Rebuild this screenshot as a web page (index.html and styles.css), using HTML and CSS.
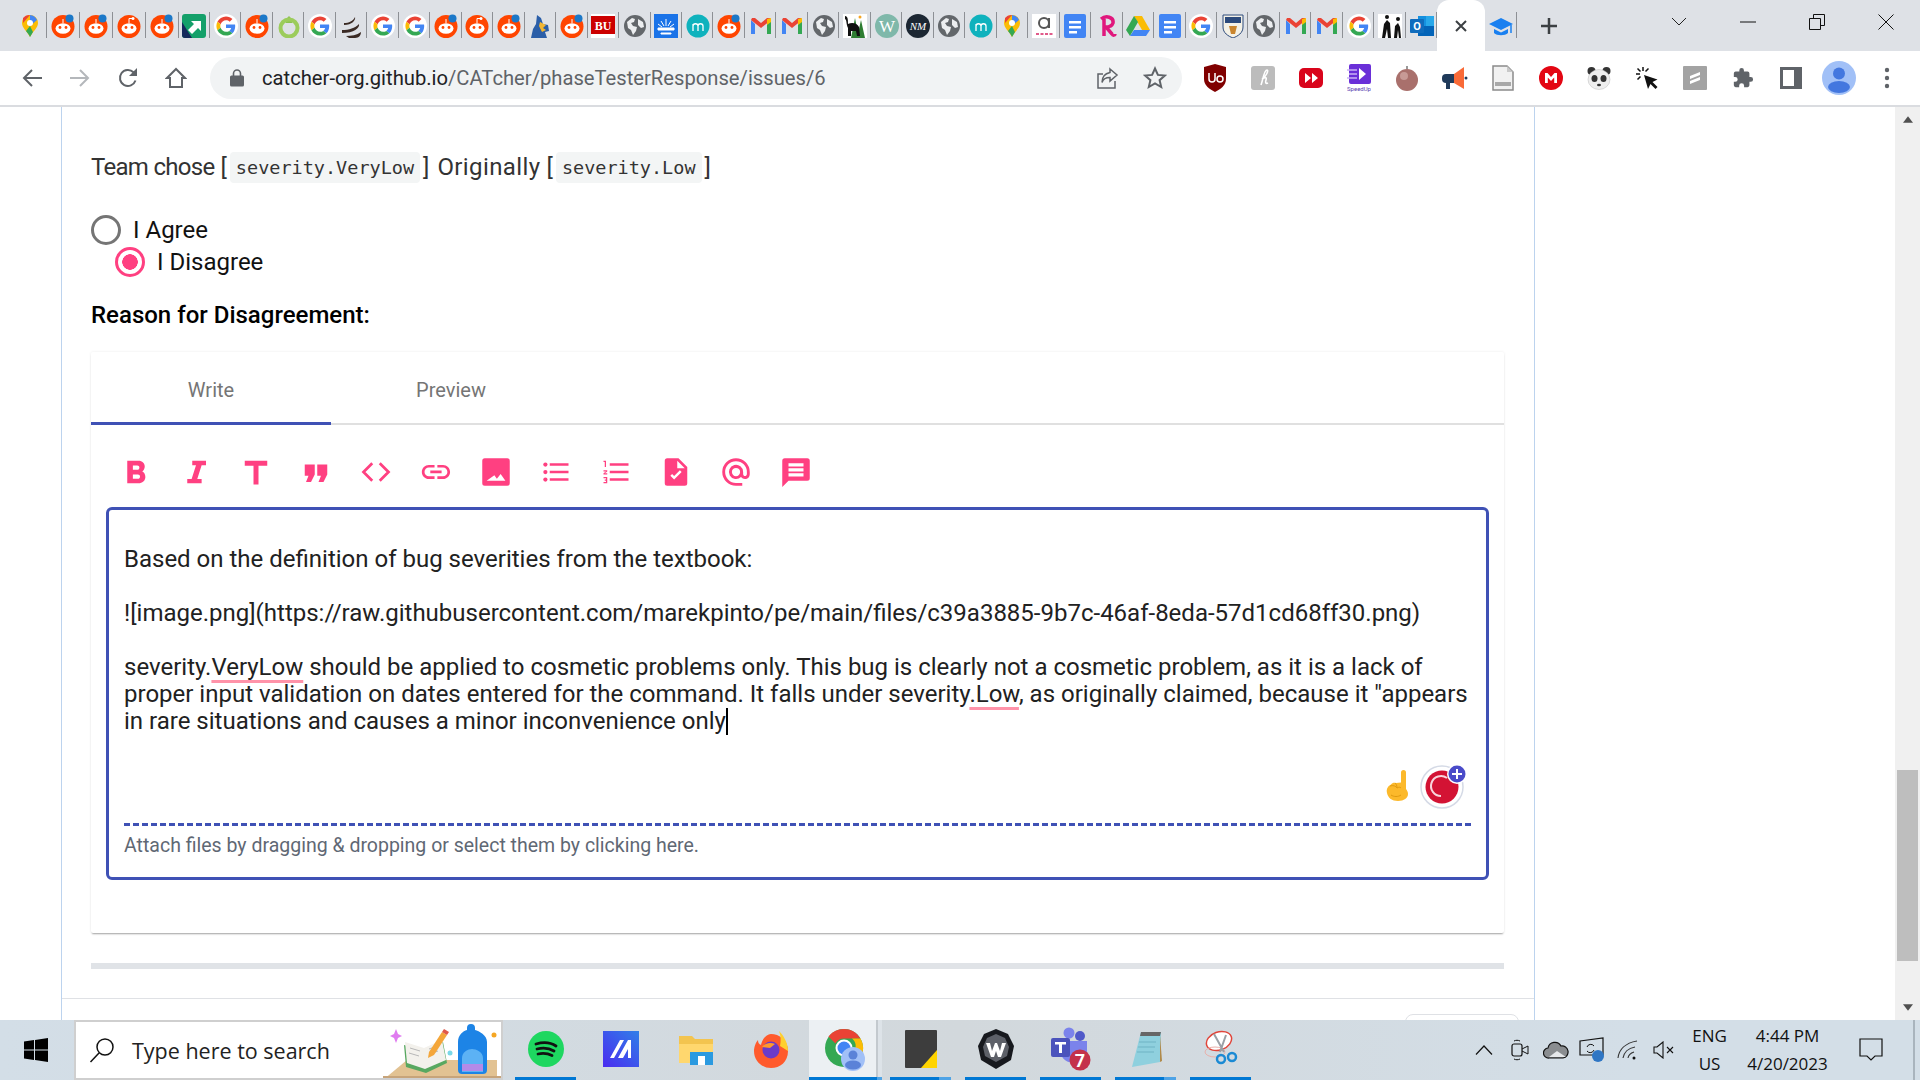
FILE: index.html
```html
<!DOCTYPE html>
<html lang="en">
<head>
    <meta charset="UTF-8">
    <meta name="viewport" content="width=device-width, initial-scale=1.0">
    <title>CATcher</title>
    <link rel="stylesheet" href="styles.css">
</head>
<body>
<svg class="defs" width="0" height="0">
    <symbol id="reddit" viewBox="0 0 24 24">
        <circle cx="12" cy="12.5" r="11.500" fill="#ff4500"/>
        <ellipse cx="12" cy="14.500" rx="7.500" ry="5.200" fill="#fff"/>
        <circle cx="9" cy="13.500" r="1.400" fill="#ff4500"/><circle cx="15" cy="13.500" r="1.400" fill="#ff4500"/>
        <path d="M12 9V5" stroke="#fff" stroke-width="1"/>
        <circle cx="18.500" cy="4.500" r="4" fill="#1c78c8"/>
    </symbol>
    <symbol id="reddit2" viewBox="0 0 24 24">
        <circle cx="12" cy="12.500" r="11.500" fill="#ff4500"/>
        <ellipse cx="12" cy="14.500" rx="7.500" ry="5.200" fill="#fff"/>
        <circle cx="9" cy="13.500" r="1.400" fill="#ff4500"/><circle cx="15" cy="13.500" r="1.400" fill="#ff4500"/>
        <path d="M12 9V4.500h3" stroke="#fff" stroke-width="1" fill="none"/><circle cx="16" cy="4.500" r="1.500" fill="#fff"/>
    </symbol>
    <symbol id="google" viewBox="-6 -6 60 60">
        <circle cx="24" cy="24" r="30" fill="#fff"/>
        <path fill="#EA4335" d="M24 9.500c3.540 0 6.710 1.220 9.210 3.600l6.850-6.850C35.900 2.380 30.470 0 24 0 14.620 0 6.510 5.380 2.560 13.220l7.980 6.190C12.430 13.720 17.740 9.500 24 9.500z"/>
        <path fill="#4285F4" d="M46.980 24.550c0-1.570-.15-3.090-.38-4.550H24v9.020h12.940c-.58 2.960-2.260 5.480-4.780 7.180l7.730 6c4.510-4.180 7.090-10.360 7.090-17.650z"/>
        <path fill="#FBBC05" d="M10.530 28.590c-.5-1.450-.78-2.990-.78-4.590s.27-3.140.78-4.590l-7.980-6.190C.92 16.460 0 20.120 0 24c0 3.880.92 7.540 2.560 10.780l7.970-6.190z"/>
        <path fill="#34A853" d="M24 48c6.480 0 11.930-2.130 15.890-5.810l-7.730-6c-2.150 1.450-4.920 2.300-8.160 2.300-6.260 0-11.570-4.220-13.470-9.910l-7.980 6.190C6.510 42.620 14.620 48 24 48z"/>
    </symbol>
    <symbol id="gmail" viewBox="0 0 24 24">
        <path d="M2 6v14h4V10z" fill="#4285f4"/><path d="M22 6v14h-4V10z" fill="#34a853"/>
        <path d="M2 6l10 8 10-8-1-2-3 0-6 5-6-5-3 0z" fill="#ea4335"/><path d="M18 5l4-1v4l-4 3z" fill="#fbbc04"/>
    </symbol>
    <symbol id="globe" viewBox="0 0 24 24">
        <circle cx="12" cy="12" r="11" fill="#63676b"/>
        <path d="M4 8l5-4 3 1-1 3-3 1 2 3 4 1-1 4-3 4-2-5-3-2zM15 5l5 3 1 5-3 1-3-3z" fill="#eceef0"/>
    </symbol>
    <symbol id="mteal" viewBox="0 0 24 24">
        <circle cx="12" cy="12" r="11.500" fill="#0fb2bd"/>
        <path d="M7 17V10M7 12c0-3 5-3 5 0v5M12 12c0-3 5-3 5 0v5" fill="none" stroke="#fff" stroke-width="1.300"/>
    </symbol>
    <symbol id="maps" viewBox="0 0 24 24">
        <path d="M12 1a8 8 0 0 0-8 8c0 5 5 8 8 14 3-6 8-9 8-14a8 8 0 0 0-8-8z" fill="#fbbc04"/>
        <path d="M5 4a8 8 0 0 1 7-3l-7 8z" fill="#ea4335"/>
        <path d="M12 1a8 8 0 0 1 7 5l-7 6z" fill="#4285f4"/>
        <path d="M8 17c1.500 2 3 3.500 4 6l3-5-3-6z" fill="#34a853"/>
        <circle cx="12" cy="9" r="3" fill="#fff"/>
    </symbol>
    <symbol id="docs" viewBox="0 0 24 24">
        <rect x="1" y="0" width="22" height="24" rx="2" fill="#4285f4"/>
        <path d="M6 7h12v2.500H6zM6 12h12v2.500H6zM6 17h8v2.500H6z" fill="#fff"/>
    </symbol>
</svg>

<div class="tabstrip">
    <div class="tab"><svg class="fav"><use href="#maps"/></svg></div>
    <div class="tab"><svg class="fav"><use href="#reddit"/></svg></div>
    <div class="tab"><svg class="fav"><use href="#reddit"/></svg></div>
    <div class="tab"><svg class="fav"><use href="#reddit2"/></svg></div>
    <div class="tab"><svg class="fav"><use href="#reddit"/></svg></div>
    <div class="tab"><svg class="fav" viewBox="0 0 24 24"><rect width="24" height="24" rx="3" fill="#14a06a"/><path d="M0 8l10 16H3a3 3 0 0 1-3-3z" fill="#152a5c"/><path d="M9 7h10v10l-3-3-6 6-4-4 6-6z" fill="#fff"/></svg></div>
    <div class="tab"><svg class="fav"><use href="#google"/></svg></div>
    <div class="tab"><svg class="fav"><use href="#reddit"/></svg></div>
    <div class="tab"><svg class="fav" viewBox="0 0 24 24"><path d="M12 2c3 3 4 5 3 7h-6c-1-2 0-4 3-7z" fill="#8cc152"/><circle cx="12" cy="14" r="8.500" fill="none" stroke="#9ccc5c" stroke-width="4"/></svg></div>
    <div class="tab"><svg class="fav"><use href="#google"/></svg></div>
    <div class="tab"><svg class="fav" viewBox="0 0 24 24"><path d="M4 9c5 0 9-2 11-6 1 3-3 8-11 8zM2 16c7 0 13-2 17-6 1 4-5 9-17 9zM6 22c5 0 11-1 15-4 0 3-2 6-6 6H9z" fill="#3a2a24"/></svg></div>
    <div class="tab"><svg class="fav"><use href="#google"/></svg></div>
    <div class="tab"><svg class="fav"><use href="#google"/></svg></div>
    <div class="tab"><svg class="fav"><use href="#reddit"/></svg></div>
    <div class="tab"><svg class="fav"><use href="#reddit2"/></svg></div>
    <div class="tab"><svg class="fav"><use href="#reddit"/></svg></div>
    <div class="tab"><svg class="fav" viewBox="0 0 24 24"><path d="M9 1l4 3 2 6 5 1 1 6-4 1 2 6H3l2-9 3-5z" fill="#2a5ea8"/><path d="M12 8l6 3-3 3 3 2-4 2-3-6z" fill="#f2b632"/></svg></div>
    <div class="tab"><svg class="fav"><use href="#reddit"/></svg></div>
    <div class="tab"><svg class="fav" viewBox="0 0 24 24"><rect width="24" height="24" fill="#fff"/><rect y="2" width="24" height="18" fill="#c00"/><text x="12" y="16" font-size="12" fill="#fff" text-anchor="middle" font-family="Liberation Serif" font-weight="700">BU</text></svg></div>
    <div class="tab"><svg class="fav"><use href="#globe"/></svg></div>
    <div class="tab"><svg class="fav" viewBox="0 0 24 24"><rect width="24" height="24" fill="#1a73e8"/><path d="M4 14h16v2H4zM7 19h10v1H7zM12 5v7M7 7l3 5M17 7l-3 5M4 10l4 3M20 10l-4 3" stroke="#fff" fill="#fff" stroke-width="1"/></svg></div>
    <div class="tab"><svg class="fav"><use href="#mteal"/></svg></div>
    <div class="tab"><svg class="fav"><use href="#reddit"/></svg></div>
    <div class="tab"><svg class="fav"><use href="#gmail"/></svg></div>
    <div class="tab"><svg class="fav"><use href="#gmail"/></svg></div>
    <div class="tab"><svg class="fav"><use href="#globe"/></svg></div>
    <div class="tab"><svg class="fav" viewBox="0 0 24 24"><rect width="24" height="24" fill="#fff"/><path d="M12 4l4 20h-8zM18 6l4 18h-8z" fill="#2e7d32"/><path d="M2 2c3 0 3 4 3 8 4-2 9-1 11 3l1 9h-3l-1-5H8v5H5V14C3 10 4 6 2 5z" fill="#111"/><circle cx="17" cy="3" r="1.500" fill="#f5a623"/></svg></div>
    <div class="tab"><svg class="fav" viewBox="0 0 24 24"><circle cx="12" cy="12" r="12" fill="#7fb8aa"/><text x="12" y="18" font-size="17" fill="#fff" text-anchor="middle" font-family="Liberation Serif">W</text></svg></div>
    <div class="tab"><svg class="fav" viewBox="0 0 24 24"><circle cx="12" cy="12" r="12" fill="#1c2733"/><text x="12" y="16" font-size="11" fill="#fff" text-anchor="middle" font-family="Liberation Serif" font-style="italic">NM</text></svg></div>
    <div class="tab"><svg class="fav"><use href="#globe"/></svg></div>
    <div class="tab"><svg class="fav"><use href="#mteal"/></svg></div>
    <div class="tab"><svg class="fav"><use href="#maps"/></svg></div>
    <div class="tab"><svg class="fav" viewBox="0 0 24 24"><rect width="24" height="24" fill="#fff"/><circle cx="12" cy="9" r="5" fill="none" stroke="#555" stroke-width="2"/><path d="M17 4v10" stroke="#555" stroke-width="2"/><path d="M4 20h3M8.500 20h3M13 20h3M17.500 20h3" stroke="#e05a8a" stroke-width="2"/></svg></div>
    <div class="tab"><svg class="fav"><use href="#docs"/></svg></div>
    <div class="tab"><svg class="fav" viewBox="0 0 24 24"><path d="M6 5c5-4 13-2 12 4-1 3-4 4-7 4l6 7c1 2 3 1 3 0M9 5v17" fill="none" stroke="#e0177d" stroke-width="3.500"/></svg></div>
    <div class="tab"><svg class="fav" viewBox="0 0 24 24"><path d="M8 2h8l8 14h-8z" fill="#fbbc04"/><path d="M8 2L0 16l4 6 8-14z" fill="#34a853"/><path d="M4 22h16l4-6H8z" fill="#4285f4"/></svg></div>
    <div class="tab"><svg class="fav"><use href="#docs"/></svg></div>
    <div class="tab"><svg class="fav"><use href="#google"/></svg></div>
    <div class="tab"><svg class="fav" viewBox="0 0 24 24"><path d="M2 1h20v12c0 6-5 9-10 11C7 22 2 19 2 13z" fill="#f4f1e6" stroke="#2c4a7c" stroke-width="1"/><path d="M4 3h16v6H4z" fill="#2c4a7c"/><path d="M8 12l8 0-2 8-4 0z" fill="#c9852e"/></svg></div>
    <div class="tab"><svg class="fav"><use href="#globe"/></svg></div>
    <div class="tab"><svg class="fav"><use href="#gmail"/></svg></div>
    <div class="tab"><svg class="fav"><use href="#gmail"/></svg></div>
    <div class="tab"><svg class="fav"><use href="#google"/></svg></div>
    <div class="tab"><svg class="fav" viewBox="0 0 24 24"><rect width="24" height="24" fill="#fff"/><path d="M4 24l2-14 3-4 3 3 1 15h-3l-1-9-2 9zM16 24l1-12 3-3 2 4 1 11h-2l-1-8-1 8z" fill="#111"/><circle cx="9" cy="3" r="2" fill="#111"/><circle cx="20" cy="5" r="2" fill="#111"/></svg></div>
    <div class="tab"><svg class="fav" viewBox="0 0 24 24"><rect x="8" y="2" width="16" height="20" fill="#1490df"/><rect x="16" y="2" width="8" height="10" fill="#28a8ea"/><rect x="8" y="12" width="16" height="10" fill="#0364b8"/><rect y="5" width="14" height="14" rx="1" fill="#0f6cbd"/><text x="7" y="16" font-size="11" font-weight="700" fill="#fff" text-anchor="middle" font-family="Roboto">O</text></svg></div>
    <div class="tab-active"><svg class="tab-x" width="14" height="14" viewBox="0 0 14 14"><path d="M2 2l10 10M12 2L2 12" stroke="#3c4043" stroke-width="2"/></svg></div>
    <div class="tab tab-last"><svg class="fav" viewBox="0 0 24 24"><path d="M12 4L0 10l12 6 12-6z" fill="#1a80f0"/><path d="M5 15v4c3 3 11 3 14 0v-4l-7 3.500z" fill="#1a80f0"/><path d="M22 11v8" stroke="#1a80f0" stroke-width="1.500"/></svg></div>
    <div class="new-tab"><svg width="18" height="18" viewBox="0 0 18 18"><path d="M9 1v16M1 9h16" stroke="#3c4043" stroke-width="2.500"/></svg></div>
    <div class="win-controls">
        <div class="win-btn"><svg width="16" height="10" viewBox="0 0 16 10"><path d="M1 1l7 7 7-7" fill="none" stroke="#222" stroke-width="1"/></svg></div>
        <div class="win-btn"><svg width="16" height="2" viewBox="0 0 16 2"><path d="M0 1h16" stroke="#111" stroke-width="1"/></svg></div>
        <div class="win-btn"><svg width="16" height="16" viewBox="0 0 16 16"><path d="M.5 4.500h11v11H.5zM4.500 4.500v-4h11v11h-4" fill="none" stroke="#111" stroke-width="1"/></svg></div>
        <div class="win-btn"><svg width="16" height="16" viewBox="0 0 16 16"><path d="M.5.500l15 15M15.500.500l-15 15" stroke="#111" stroke-width="1"/></svg></div>
    </div>
</div>

<div class="toolbar">
    <div class="nav-btn"><svg width="22" height="22" viewBox="0 0 22 22"><path d="M21 11H3M11 3l-8 8 8 8" fill="none" stroke="#5f6368" stroke-width="2"/></svg></div>
    <div class="nav-btn"><svg width="22" height="22" viewBox="0 0 22 22"><path d="M1 11h18M11 3l8 8-8 8" fill="none" stroke="#b4b7bb" stroke-width="2"/></svg></div>
    <div class="nav-btn"><svg width="24" height="24" viewBox="0 0 24 24"><path d="M19.500 14.500A8 8 0 1 1 17.500 6.200" fill="none" stroke="#5f6368" stroke-width="2"/><path d="M21 2v8h-8z" fill="#5f6368"/></svg></div>
    <div class="nav-btn"><svg width="22" height="22" viewBox="0 0 22 22"><path d="M11 2L2 11h3v9h12v-9h3z" fill="none" stroke="#5f6368" stroke-width="2"/></svg></div>
    <div class="omnibox">
        <svg class="lock" width="14" height="18" viewBox="0 0 14 18"><path d="M3.500 7V4.500a3.500 3.500 0 0 1 7 0V7" fill="none" stroke="#5f6368" stroke-width="1.600"/><rect y="6.500" width="14" height="11" rx="1.500" fill="#5f6368"/></svg>
        <span class="url"><span class="url-host">catcher-org.github.io</span>/CATcher/phaseTesterResponse/issues/6</span>
        <svg class="omni-icon" width="24" height="24" viewBox="0 0 24 24"><path d="M20 15v7H3V8h5" fill="none" stroke="#5f6368" stroke-width="1.500"/><path d="M15 3l7 6-7 6v-3.500c-4 0-7 1.500-8 5 0-6 3-9 8-10z" fill="none" stroke="#5f6368" stroke-width="1.500"/></svg>
        <svg class="omni-icon" width="24" height="24" viewBox="0 0 24 24"><path d="M12 2.500l2.900 6.400 7 .7-5.300 4.600 1.600 6.800-6.200-3.600-6.200 3.600 1.600-6.800L2.100 9.600l7-.7z" fill="none" stroke="#5f6368" stroke-width="2"/></svg>
    </div>
    <div class="ext-row">
        <div class="ext"><svg width="24" height="28" viewBox="0 0 24 28"><path d="M12 0l11 3v12c0 6-5 10-11 13C6 25 1 21 1 15V3z" fill="#800000"/><path d="M6 9v6a3 3 0 0 0 6 0V9M14 15a3 3 0 1 0 6 0 3 3 0 1 0-6 0" fill="none" stroke="#fff" stroke-width="1.500"/></svg></div>
        <div class="ext"><svg width="24" height="24" viewBox="0 0 24 24"><rect width="24" height="24" rx="3" fill="#bcbcbc"/><path d="M10 19c2-5 3-15 6-15 2 0-1 7-5 9 3-2 5-2 4 1s0 4 2 3" fill="none" stroke="#fff" stroke-width="1.600"/></svg></div>
        <div class="ext"><svg width="24" height="20" viewBox="0 0 24 20"><rect width="24" height="20" rx="5" fill="#d9041b"/><path d="M6 5l6 5-6 5zM13 5l6 5-6 5z" fill="#fff"/></svg></div>
        <div class="ext"><svg width="24" height="28" viewBox="0 0 24 28"><rect x="2" width="22" height="20" rx="2" fill="#6a2fd8"/><path d="M0 6h10M2 10h8M0 14h10" stroke="#c9b2f5" stroke-width="1.500"/><path d="M12 4l7 6-7 6z" fill="#fff"/><text x="12" y="27" font-size="6" fill="#5a3db0" text-anchor="middle" font-family="Roboto">SpeedUp</text></svg></div>
        <div class="ext"><svg width="22" height="26" viewBox="0 0 22 26"><circle cx="11" cy="15" r="11" fill="#a9706c"/><circle cx="8" cy="11" r="4" fill="#c79a96"/><path d="M11 4V1" stroke="#777" stroke-width="1.500"/></svg></div>
        <div class="ext"><svg width="26" height="24" viewBox="0 0 26 24"><path d="M4 8h8v9H8v6H4z" fill="#1f3a5a"/><path d="M0 12a4 4 0 0 1 4-4v9a4 4 0 0 1-4-4z" fill="#1f3a5a"/><path d="M12 8l10-7v22l-10-6z" fill="#f96a37"/><circle cx="24" cy="12" r="1.500" fill="#1f3a5a"/></svg></div>
        <div class="ext"><svg width="22" height="26" viewBox="0 0 22 26"><path d="M1 1h14l6 6v18H1z" fill="#f1f1f1" stroke="#8a8a8a" stroke-width="1.500"/><path d="M15 1v6h6z" fill="#c8c8c8"/><rect x="3" y="17" width="16" height="4" fill="#a8a8a8"/></svg></div>
        <div class="ext"><svg width="24" height="24" viewBox="0 0 24 24"><circle cx="12" cy="12" r="12" fill="#e30613"/><path d="M6 17V7h2.500l3.500 4 3.500-4H18v10h-2.800v-5.500L12 15l-3.200-3.500V17z" fill="#fff"/></svg></div>
        <div class="ext"><svg width="24" height="24" viewBox="0 0 24 24"><circle cx="4.500" cy="5" r="4" fill="#333"/><circle cx="19.500" cy="5" r="4" fill="#333"/><ellipse cx="12" cy="13.500" rx="11" ry="10" fill="#eee" stroke="#bbb" stroke-width=".5"/><ellipse cx="7.500" cy="12.500" rx="3" ry="3.500" fill="#333"/><ellipse cx="16.500" cy="12.500" rx="3" ry="3.500" fill="#333"/><ellipse cx="12" cy="19" rx="2" ry="1.300" fill="#333"/></svg></div>
        <div class="ext"><svg width="24" height="24" viewBox="0 0 24 24"><path d="M9 9l4 14 2.500-5 5 5 2-2-5-5 5-2.500z" fill="#111"/><path d="M8 1v4M1 8h4M2.500 2.500l3 3M2.500 13.500l3-3M13.500 2.500l-3 3" stroke="#111" stroke-width="1.500"/></svg></div>
        <div class="ext"><svg width="24" height="24" viewBox="0 0 24 24"><rect width="24" height="24" rx="1" fill="#a3a3a3"/><path d="M7 10l10-4v3L7 13zM7 15l10-4v3L7 18z" fill="#fff"/></svg></div>
        <div class="ext"><svg width="22" height="22" viewBox="0 0 24 24"><path d="M20.500 11H19V7a2 2 0 0 0-2-2h-4V3.500a2.500 2.500 0 0 0-5 0V5H4a2 2 0 0 0-2 2v3.800h1.500a2.700 2.700 0 0 1 0 5.400H2V20a2 2 0 0 0 2 2h3.800v-1.500a2.700 2.700 0 0 1 5.400 0V22H17a2 2 0 0 0 2-2v-4h1.500a2.500 2.500 0 0 0 0-5z" fill="#5f6368"/></svg></div>
        <div class="ext"><svg width="22" height="22" viewBox="0 0 22 22"><path fill-rule="evenodd" d="M0 0h22v22H0zM3 3v16h11V3z" fill="#5f6368"/></svg></div>
        <div class="ext"><svg width="34" height="34" viewBox="0 0 34 34"><circle cx="17" cy="17" r="17" fill="#a1c0f7"/><circle cx="17" cy="12.500" r="6" fill="#4377df"/><ellipse cx="17" cy="26" rx="11" ry="6" fill="#4377df"/></svg></div>
        <div class="ext"><svg width="6" height="22" viewBox="0 0 6 22"><circle cx="3" cy="3" r="2.200" fill="#5f6368"/><circle cx="3" cy="11" r="2.200" fill="#5f6368"/><circle cx="3" cy="19" r="2.200" fill="#5f6368"/></svg></div>
    </div>
</div>

<div class="viewport">
    <div class="gutter"></div>
    <div class="page">
        <p class="team-line"><span><span class="team-label">Team chose</span> [</span> <code>severity.VeryLow</code> <span>] <span class="orig-label">Originally</span> [</span> <code>severity.Low</code> <span>]</span></p>
        <div class="radio-row">
            <span class="radio"></span><span>I Agree</span>
        </div>
        <div class="radio-row radio-row-second">
            <span class="radio radio-on"></span><span>I Disagree</span>
        </div>
        <h4 class="reason">Reason for Disagreement:</h4>

        <div class="card">
            <div class="tabs">
                <div class="md-tab md-tab-on">Write</div>
                <div class="md-tab">Preview</div>
            </div>
            <div class="md-icons">
                <svg class="md-icon" viewBox="0 0 24 24"><path fill-rule="evenodd" d="M5 3h9c3 0 5 2 5 4.500 0 1.800-1 3.300-2 4 1.500.7 2.500 2.300 2.500 4.500 0 3-2.500 5-5.500 5H5zM9.500 6.800v3.400h3.500c1 0 1.700-.7 1.700-1.700s-.7-1.700-1.700-1.700zM9.500 14v3.400h4c1 0 1.700-.7 1.700-1.700s-.7-1.700-1.700-1.700z"/></svg>
                <svg class="md-icon" viewBox="0 0 24 24"><path d="M9 3h11v3.500h-3.500L13 17.500h3.500V21H5v-3.500h3.500L12 6.500H9z"/></svg>
                <svg class="md-icon" viewBox="0 0 24 24"><path d="M3 3h18v4h-7v15h-4V7H3z"/></svg>
                <svg class="md-icon" viewBox="0 0 24 24"><path d="M3 6h8v8l-3 6H4l2-5H3zM13 6h8v8l-3 6h-4l2-5h-3z"/></svg>
                <svg class="md-icon" viewBox="0 0 24 24"><path d="M9 5l-7 7 7 7M15 5l7 7-7 7" fill="none" stroke="#ff4081" stroke-width="2.200"/></svg>
                <svg class="md-icon" viewBox="0 0 24 24"><path d="M3.900 12c0-1.710 1.390-3.100 3.100-3.100h4V7H7c-2.760 0-5 2.240-5 5s2.240 5 5 5h4v-1.900H7c-1.710 0-3.100-1.390-3.100-3.100zM8 13h8v-2H8v2zm9-6h-4v1.900h4c1.710 0 3.100 1.390 3.100 3.100s-1.390 3.100-3.100 3.100h-4V17h4c2.760 0 5-2.240 5-5s-2.240-5-5-5z" transform="translate(-1.600 -1.600) scale(1.130)"/></svg>
                <svg class="md-icon" viewBox="0 0 24 24"><path fill-rule="evenodd" d="M3 1h18a2 2 0 0 1 2 2v18a2 2 0 0 1-2 2H3a2 2 0 0 1-2-2V3a2 2 0 0 1 2-2zM4.500 19h15l-3.800-5.500-3 3.800-2-2.800z"/></svg>
                <svg class="md-icon" viewBox="0 0 24 24"><path d="M7 5h15v2H7zM7 11h15v2H7zM7 17h15v2H7z"/><circle cx="3.500" cy="6" r="1.700"/><circle cx="3.500" cy="12" r="1.700"/><circle cx="3.500" cy="18" r="1.700"/></svg>
                <svg class="md-icon" viewBox="0 0 24 24"><path d="M7 5h15v2H7zM7 11h15v2H7zM7 17h15v2H7zM2 3h2v5H3V4H2zM2 10.500h3v1l-2 1.500h2v1H2v-1l2-1.500H2zM2 16h3v5H2v-1h2v-1H3v-1h1v-1H2z"/></svg>
                <svg class="md-icon" viewBox="0 0 24 24"><path fill-rule="evenodd" d="M5 1h9l7 7v13a2 2 0 0 1-2 2H5a2 2 0 0 1-2-2V3a2 2 0 0 1 2-2zM13 3v6h6zM7.500 15l3 3 6-6-1.400-1.400-4.600 4.600-1.600-1.600z"/></svg>
                <svg class="md-icon" viewBox="0 0 24 24"><path fill-rule="evenodd" d="M12 1a11 11 0 0 0 0 22h5v-2.300h-5A8.700 8.700 0 1 1 20.700 12v1.500c0 .9-.7 1.700-1.500 1.700s-1.500-.8-1.500-1.700V12a5.700 5.700 0 1 0-1.700 4c.8 1 2 1.600 3.200 1.600 2.200 0 3.800-1.800 3.800-4.100V12A11 11 0 0 0 12 1zm0 14.300a3.300 3.300 0 1 1 0-6.600 3.300 3.300 0 0 1 0 6.600z"/></svg>
                <svg class="md-icon" viewBox="0 0 24 24"><path fill-rule="evenodd" d="M3 1h18a2 2 0 0 1 2 2v14a2 2 0 0 1-2 2H6l-5 5V3a2 2 0 0 1 2-2zM6 5v2.500h12V5zM6 9v2.500h12V9zM6 13v2.500h12V13z"/></svg>
            </div>
            <div class="editor">
                <div class="editor-text">Based on the definition of bug severities from the textbook:

![image.png](https://raw.githubusercontent.com/marekpinto/pe/main/files/c39a3885-9b7c-46af-8eda-57d1cd68ff30.png)

severity.<span class="spell">VeryLow</span> should be applied to cosmetic problems only. This bug is clearly not a cosmetic problem, as it is a lack of proper input validation on dates entered for the command. It falls under severity<span class="spell">.Low</span>, as originally claimed, because it "appears in rare situations and causes a minor inconvenience only<span class="caret"></span></div>
                <div class="editor-widgets">
                    <svg width="22" height="31" viewBox="0 0 22 31"><path d="M15 2.500a2.500 2.500 0 0 1 5 0V19c1 1 2 3 2 5 0 4-4 7-10 7-6 0-10-3-11-8-.5-2-.5-4 1-6 1-1.500 2-2 3-2.500 1-1.500 3-2 5-1.500l5-.5z" fill="#fcb92b"/><path d="M4 16c3-1 6 0 7 2M9 13c1 1 2 2 2 5 2-1 3-1 4 0M5 25c3 2 7 2 10 0" fill="none" stroke="#e09a10" stroke-width="1"/></svg>
                    <svg width="48" height="48" viewBox="0 0 48 48"><circle cx="22" cy="26" r="21" fill="#fff" stroke="#d5dae6" stroke-width="1.500"/><circle cx="22" cy="26" r="16.500" fill="#d31334"/><path d="M27 17a10 10 0 1 0-6 18" fill="none" stroke="#f8d5dc" stroke-width="2"/><circle cx="37" cy="13" r="10" fill="#fff"/><circle cx="37" cy="13" r="8.500" fill="#4a4bc9"/><path d="M37 8v10M32 13h10" stroke="#fff" stroke-width="2"/></svg>
                </div>
                <div class="attach">Attach files by dragging &amp; dropping or select them by clicking here.</div>
            </div>
        </div>

        <div class="divider"></div>
        <div class="page-foot"><div class="foot-btn"></div></div>
    </div>
    <div class="blank"></div>
    <div class="scrollbar">
        <svg width="10" height="7" viewBox="0 0 12 8"><path d="M6 0l6 8H0z" fill="#505050"/></svg>
        <div class="thumb"></div>
        <svg width="10" height="7" viewBox="0 0 12 8"><path d="M6 8l6-8H0z" fill="#505050"/></svg>
    </div>
</div>

<div class="taskbar">
    <div class="start"><svg width="24" height="24" viewBox="0 0 24 24"><path d="M0 3.400l10-1.400v9.500H0zM11 1.900L24 0v11.500H11zM0 12.500h10V22L0 20.600zM11 12.500h13V24l-13-1.900z" fill="#000"/></svg></div>
    <div class="search">
        <svg class="search-glass" width="26" height="26" viewBox="0 0 26 26"><circle cx="16" cy="10" r="8" fill="none" stroke="#111" stroke-width="1.500"/><path d="M10 16L1.500 25" stroke="#111" stroke-width="1.500"/></svg>
        <span class="search-text">Type here to search</span>
        <svg class="search-art" width="118" height="60" viewBox="6 0 118 60">
            <path d="M6 60L30 40h90v20z" fill="#e2c292"/><path d="M6 56h118v4H6z" fill="#c7a47a"/>
            <path d="M19 9l2 5 4 2-4 2-2 5-2-5-4-2 4-2z" fill="#e07cf0"/>
            <path d="M27 25l20 5 19-8 4 21-21 10-20-6z" fill="#58a860"/><path d="M28 22l19 6 18-8 4 20-21 9-18-6z" fill="#f3f1ec"/>
            <path d="M33 28l10 3M32 33l10 3M52 29l8-3M53 34l8-3" stroke="#b8b8b8" stroke-width="1"/>
            <path d="M52 32l13-20 5 3-13 20-6 3z" fill="#f4a63a"/><path d="M65 12l2-3 5 3-2 3z" fill="#e0584a"/>
            <circle cx="73" cy="33" r="2.500" fill="#7ad8e8"/>
            <path d="M81 50V22c0-7 5-11 9-12V8a4 4 0 0 1 8 0v2c4 1 12 5 12 12v28c0 3-2 4-4 4H85c-2 0-4-1-4-4z" fill="#1d84e6"/><path d="M85 52V38c0-6 6-9 10-9s11 3 11 9v14z" fill="#5cb2f5"/><path d="M85 44h21v7H85z" fill="#b48ae8"/>
            <circle cx="117" cy="15" r="2.500" fill="#f5a623"/>
        </svg>
    </div>
    <div class="apps">
        <div class="app app-open"><svg width="36" height="36" viewBox="0 0 36 36"><circle cx="18" cy="18" r="18" fill="#1ed760"/><path d="M8 13c7-2 14-2 20 2M9 18c6-1.500 12-1 17 2M10 23c5-1 10-.5 14 1.500" fill="none" stroke="#111" stroke-width="2.800" stroke-linecap="round"/></svg></div>
        <div class="app"><svg width="36" height="36" viewBox="0 0 36 36"><defs><linearGradient id="ma" x1="0" y1="1" x2="1" y2="0"><stop offset="0" stop-color="#4b2bf0"/><stop offset="1" stop-color="#2f7fe8"/></linearGradient></defs><rect width="36" height="36" fill="url(#ma)"/><path d="M7 27L17 9h4L11 27zM15 27L25 9h3v18h-3v-9l-5 9z" fill="#fff"/></svg></div>
        <div class="app"><svg width="36" height="32" viewBox="0 0 36 32"><path d="M1 3h13l3 3h18v24H1z" fill="#f3c44f"/><rect x="1" y="11" width="34" height="19" fill="#ffd76e"/><rect x="12" y="19" width="23" height="13" fill="#2b9ae0"/><rect x="20" y="23" width="7" height="9" fill="#fff"/></svg></div>
        <div class="app"><svg width="36" height="38" viewBox="0 0 36 38"><path d="M18 4c8 0 17 6 17 17s-8 17-17 17S1 31 1 21c0-4 2-9 4-11 0 3 1 4 3 5 1-5 5-11 10-11z" fill="#ff5a2c"/><path d="M26 1c5 5 9 12 9 20l-8-5c1-5 1-10-1-15z" fill="#ffcf2e"/><circle cx="18" cy="20" r="8.500" fill="#6b3bc9"/><path d="M9 17c3-4 9-5 13-3l-5 4z" fill="#ff9a2c"/></svg></div>
        <div class="app app-chrome"><svg width="42" height="44" viewBox="0 0 42 44">
            <circle cx="19" cy="21" r="19" fill="#34a853"/>
            <path d="M19 2a19 19 0 0 1 16.500 9.500H19a9.500 9.500 0 0 0-8.500 5L3.500 9.500A19 19 0 0 1 19 2z" fill="#ea4335"/>
            <path d="M35.500 11.500A19 19 0 0 1 19 40l8-13.500a9.500 9.500 0 0 0 0-15z" fill="#fbbc04"/>
            <circle cx="19" cy="21" r="8.500" fill="#fff"/><circle cx="19" cy="21" r="6.500" fill="#4285f4"/>
            <circle cx="28" cy="32" r="12" fill="#a1c0f7"/><circle cx="28" cy="28" r="4.500" fill="#5a82d8"/><ellipse cx="28" cy="38" rx="8" ry="4.500" fill="#5a82d8"/>
        </svg></div>
        <div class="app app-open app-stack"><svg width="32" height="38" viewBox="0 0 32 38"><rect width="32" height="38" rx="1" fill="#3d3d3d"/><path d="M16 38l16-18v18z" fill="#ffd400"/></svg></div>
        <div class="app app-open"><svg width="36" height="40" viewBox="0 0 36 40"><path d="M18 0l12 5 6 12-3 14-15 9-15-9L0 17 6 5z" fill="#17191e"/><path d="M18 5l9 4 4 9-2 9-11 6-11-6-2-9 4-9z" fill="#5d6068"/><path d="M8 14h4l2 8 3-8h2l3 8 2-8h4l-5 14h-3l-2-6-2 6h-3z" fill="#fff"/></svg></div>
        <div class="app app-open"><svg width="40" height="44" viewBox="0 0 40 44"><circle cx="29" cy="9" r="5" fill="#5059c9"/><circle cx="18" cy="6" r="5.500" fill="#7b83eb"/><path d="M10 14h26v12c0 6-6 10-13 10-6 0-13-4-13-10z" fill="#7b83eb"/><rect y="11" width="19" height="19" rx="2" fill="#4b53bc"/><path d="M4 15h11v2.500h-4V26H8v-8.500H4z" fill="#fff"/><circle cx="29" cy="33" r="10.500" fill="#c4314b"/><text x="29" y="39.500" font-size="18" font-weight="700" fill="#fff" text-anchor="middle" font-family="Roboto">7</text></svg></div>
        <div class="app app-open app-stack"><svg width="34" height="38" viewBox="0 0 34 38"><path d="M12 2h20l-1 30-28 5z" fill="#8fd0de"/><path d="M12 2h20l-1 4H11z" fill="#666"/><path d="M31 5l2 26-2 1z" fill="#b08a4a"/><path d="M10 12h17M9 17h17M8 22h17" stroke="#6fb3c4" stroke-width="1"/></svg></div>
        <div class="app app-open"><svg width="34" height="38" viewBox="0 0 34 38"><ellipse cx="15" cy="11" rx="13" ry="9" transform="rotate(-20 15 11)" fill="#fff" stroke="#e0453a" stroke-width="1.500"/><ellipse cx="11" cy="22" rx="10" ry="5" fill="none" stroke="#e8b0aa" stroke-width="1"/><path d="M10 4l10 18M22 5l-6 17" stroke="#9aa0a6" stroke-width="2"/><circle cx="17" cy="29" r="4" fill="none" stroke="#1a8ad4" stroke-width="2.500"/><circle cx="28" cy="27" r="4" fill="none" stroke="#1a8ad4" stroke-width="2.500"/></svg></div>
    </div>
    <div class="tray">
        <div class="tray-item"><svg width="18" height="10" viewBox="0 0 18 10"><path d="M1 9.500L9 1l8 8.500" fill="none" stroke="#111" stroke-width="1.200"/></svg></div>
        <div class="tray-item"><svg width="18" height="24" viewBox="0 0 18 24"><rect x="1" y="6" width="10" height="12" rx="2" fill="none" stroke="#111" stroke-width="1.200"/><path d="M11 11l6-3v8l-6-3M3 3c2-1 4-1 6 0M3 21c2 1 4 1 6 0" fill="none" stroke="#111" stroke-width="1"/></svg></div>
        <div class="tray-item"><svg width="26" height="18" viewBox="0 0 26 18"><path d="M6 17a5 5 0 0 1-1-10 7 7 0 0 1 13-2 6 6 0 0 1 2 12z" fill="#8a8d90" stroke="#111" stroke-width="1.200"/><path d="M6 16l8-6 9 6z" fill="#e6e8ea"/></svg></div>
        <div class="tray-item"><svg width="26" height="26" viewBox="0 0 26 26"><path d="M1 4l23-3v17H1z" fill="none" stroke="#111" stroke-width="1.200"/><path d="M8 10a4 4 0 0 1 7-1M15 13a4 4 0 0 1-7 1" fill="none" stroke="#111"/><circle cx="19" cy="19" r="6" fill="#2f76c4"/></svg></div>
        <div class="tray-item"><svg width="22" height="20" viewBox="0 0 22 20"><path d="M1 18C2 10 8 3 20 1M6 18c1-5 5-10 12-11M11 18c.5-3 3-5 6-6" fill="none" stroke="#333" stroke-width="1.100"/><circle cx="17" cy="18" r="1.500" fill="#111"/></svg></div>
        <div class="tray-item"><svg width="22" height="18" viewBox="0 0 22 18"><path d="M1 6h3l6-5v16l-6-5H1zM14 6l6 6M20 6l-6 6" fill="none" stroke="#111" stroke-width="1.100"/></svg></div>
        <div class="lang"><span>ENG</span><span>US</span></div>
        <div class="clock"><span>4:44 PM</span><span>4/20/2023</span></div>
        <div class="notif"><svg width="24" height="24" viewBox="0 0 24 24"><path d="M1 1h22v17h-7l-4 4-4-4H1z" fill="none" stroke="#111" stroke-width="1.200"/></svg></div>
        <div class="show-desktop"></div>
    </div>
</div>
</body>
</html>
```

FILE: styles.css
```css
* {
    box-sizing: border-box;
    margin: 0;
    padding: 0;
}

html, body {
    height: 1080px;
    overflow: hidden;
}

body {
    display: flex;
    flex-direction: column;
    background: #fff;
    font-family: 'Roboto', sans-serif;
    color: #212121;
}

.defs {
    display: none;
}

/* browser tab strip */
.tabstrip {
    display: flex;
    height: 51px;
    flex: none;
    padding-left: 13.500px;
    background: #dee1e6;
}

.tab {
    display: flex;
    align-items: center;
    justify-content: center;
    width: 31.470px;
    flex: none;
    height: 51px;
    position: relative;
}

.tab:nth-child(-n+5) {
    width: 33px;
}

.tab::after {
    content: "";
    position: absolute;
    right: 0;
    top: 12px;
    height: 26px;
    width: 1px;
    background: #8d9095;
}

.fav {
    width: 24px;
    height: 24px;
}

.tab-active {
    display: flex;
    align-items: center;
    justify-content: center;
    width: 48px;
    flex: none;
    height: 51px;
    background: #fff;
    border-radius: 12px 12px 0 0;
}

.tab-last {
    width: 32px;
}

.new-tab {
    display: flex;
    align-items: center;
    justify-content: center;
    width: 32px;
    margin-left: 16px;
}

.win-controls {
    display: flex;
    margin-left: auto;
}

.win-btn {
    display: flex;
    align-items: flex-start;
    justify-content: center;
    width: 69px;
    padding-top: 14px;
}

.win-btn:nth-child(1) {
    padding-top: 17px;
}

.win-btn:nth-child(2) {
    padding-top: 21px;
}

/* address bar row */
.toolbar {
    display: flex;
    align-items: center;
    height: 56px;
    flex: none;
    padding-left: 8px;
    background: #fff;
    border-bottom: 2px solid #dadce0;
}

.nav-btn {
    display: flex;
    align-items: center;
    justify-content: center;
    width: 48px;
}

.omnibox {
    display: flex;
    align-items: center;
    width: 972px;
    height: 42px;
    margin-left: 10px;
    padding: 0 15px 0 20px;
    background: #f1f3f4;
    border-radius: 21px;
}

.lock {
    margin-right: 18px;
}

.url {
    flex: 1;
    font-size: 20.200px;
    color: #5f6368;
}

.url-host {
    color: #202124;
}

.omni-icon {
    margin-left: 24px;
}

.ext-row {
    display: flex;
    margin-left: 9px;
}

.ext {
    display: flex;
    align-items: center;
    justify-content: center;
    width: 48px;
}

/* page */
.viewport {
    display: flex;
    flex: 1;
    min-height: 0;
}

.gutter {
    width: 61px;
    flex: none;
}

.page {
    width: 1474px;
    flex: none;
    padding: 44px 30px 0 29px;
    border-left: 1px solid #bcd3ee;
    border-right: 1px solid #bcd3ee;
    overflow: hidden;
}

.blank {
    flex: 1;
}

.team-line {
    display: flex;
    align-items: center;
    height: 32px;
    gap: 3px;
    font-size: 24px;
    color: #333;
}

.team-label {
    letter-spacing: -0.7px;
}

.orig-label {
    margin-left: 2px;
    letter-spacing: 0.4px;
}

code {
    padding: 5px 6px;
    font-family: 'DejaVu Sans Mono', monospace;
    font-size: 18.500px;
    background: #f3f5f5;
    border-radius: 4px;
}

.radio-row {
    display: flex;
    align-items: center;
    gap: 12px;
    height: 32px;
    margin-top: 31px;
    font-size: 24px;
    color: #111;
}

.radio-row-second {
    margin-top: 0;
    padding-left: 24px;
}

.radio {
    width: 30px;
    height: 30px;
    flex: none;
    border: 3px solid #757575;
    border-radius: 50%;
}

.radio-on {
    border-color: #ff4081;
    background: radial-gradient(circle, #ff4081 0 7.500px, transparent 8px);
}

.reason {
    margin-top: 21px;
    font-size: 24px;
    font-weight: 500;
    color: #000;
    line-height: 32px;
}

.card {
    height: 581px;
    margin-top: 21px;
    background: #fff;
    box-shadow: 0 2px 2px -1px rgba(0, 0, 0, 0.35), 0 0 3px rgba(0, 0, 0, 0.08);
    border-radius: 2px;
}

.tabs {
    display: flex;
    height: 73px;
    border-bottom: 2px solid #e0e0e0;
}

.md-tab {
    display: flex;
    align-items: center;
    justify-content: center;
    width: 240px;
    height: 73px;
    padding-top: 5px;
    border-bottom: 3px solid transparent;
    font-size: 20px;
    color: #757575;
}

.md-tab-on {
    border-bottom-color: #3f51b5;
}

.md-icons {
    display: flex;
    align-items: center;
    gap: 30px;
    height: 82px;
    padding: 12px 0 0 30px;
}

.md-icon {
    width: 30px;
    height: 30px;
    fill: #ff4081;
}

.editor {
    display: flex;
    flex-direction: column;
    height: 373px;
    margin: 0 15px;
    padding: 0 15px;
    border: 3px solid #3f51b5;
    border-radius: 6px;
}

.editor-text {
    height: 247px;
    padding-top: 36px;
    white-space: pre-wrap;
    font-size: 24px;
    line-height: 27px;
    color: #212121;
}

.spell {
    text-decoration: underline;
    text-decoration-color: #ff93a9;
    text-decoration-thickness: 3px;
    text-underline-offset: 5px;
    text-decoration-skip-ink: none;
}

.caret {
    display: inline-block;
    width: 2px;
    height: 27px;
    margin-bottom: -6px;
    background: #000;
}

.editor-widgets {
    display: flex;
    align-items: center;
    justify-content: flex-end;
    gap: 12px;
    height: 66px;
    padding: 0 3px 10px 0;
}

.attach {
    height: 54px;
    padding-top: 8px;
    border-top: 3px dashed #3f51b5;
    font-size: 19.500px;
    color: #5f6874;
}

.divider {
    height: 6px;
    margin-top: 30px;
    background: #e0e3e7;
}

.page-foot {
    display: flex;
    justify-content: flex-end;
    height: 40px;
    margin: 29px -30px 0 -29px;
    padding: 15px 15px 0 0;
    border-top: 1px solid #dfe1e5;
}

.foot-btn {
    width: 114px;
    height: 30px;
    border: 1px solid #dfe1e5;
    border-radius: 8px;
}

.scrollbar {
    display: flex;
    flex-direction: column;
    align-items: center;
    width: 25px;
    flex: none;
    padding-top: 9px;
    background: #f0f0f0;
}

.thumb {
    width: 21px;
    height: 191px;
    margin-top: 647px;
    margin-bottom: 43px;
    background: #bebebe;
}

/* windows taskbar */
.taskbar {
    display: flex;
    align-items: center;
    height: 60px;
    flex: none;
    background: linear-gradient(90deg, #d3dee7, #d2d8dc 50%, #d3dee7 85%);
}

.start {
    display: flex;
    align-items: center;
    justify-content: center;
    width: 74px;
    padding-right: 2px;
}

.search {
    display: flex;
    align-items: center;
    width: 429px;
    height: 60px;
    padding-left: 13px;
    background: #fff;
    border: 2px solid #cfcfcf;
    overflow: hidden;
}

.search-glass {
    margin-right: 17px;
}

.search-text {
    flex: 1;
    font-family: 'Open Sans', sans-serif;
    font-size: 21.500px;
    color: #222;
}

.search-art {
    flex: none;
}

.apps {
    display: flex;
    gap: 14px;
    margin-left: 12px;
}

.app {
    display: flex;
    align-items: center;
    justify-content: center;
    width: 61px;
    height: 60px;
    border-bottom: 3px solid transparent;
}

.app-open {
    border-bottom-color: #0078d4;
}

.app-stack {
    border-image: linear-gradient(90deg, #0078d4 80%, #4ea3e6 80%) 1;
}

.app-chrome {
    width: 73px;
    margin: 0 -6px;
    background: linear-gradient(90deg, #ecf0f3 67px, #c3c9ce 67px, #c3c9ce 69px, #dde3e8 69px);
    border-image: linear-gradient(90deg, #0078d4 92%, #4ea3e6 92%) 1;
}

.tray {
    display: flex;
    align-items: center;
    margin-left: auto;
    height: 60px;
}

.tray-item {
    display: flex;
    align-items: center;
    justify-content: center;
    width: 36px;
}

.lang, .clock {
    display: flex;
    flex-direction: column;
    align-items: center;
    gap: 4px;
    font-family: 'Open Sans', sans-serif;
    font-size: 17px;
    line-height: 24px;
    color: #111;
}

.lang {
    width: 56px;
}

.clock {
    width: 100px;
}

.notif {
    display: flex;
    justify-content: center;
    width: 36px;
    margin-left: 15px;
}

.show-desktop {
    width: 2px;
    height: 60px;
    margin-left: 24px;
    margin-right: 5.500px;
    background: #a9b4bd;
}
```
